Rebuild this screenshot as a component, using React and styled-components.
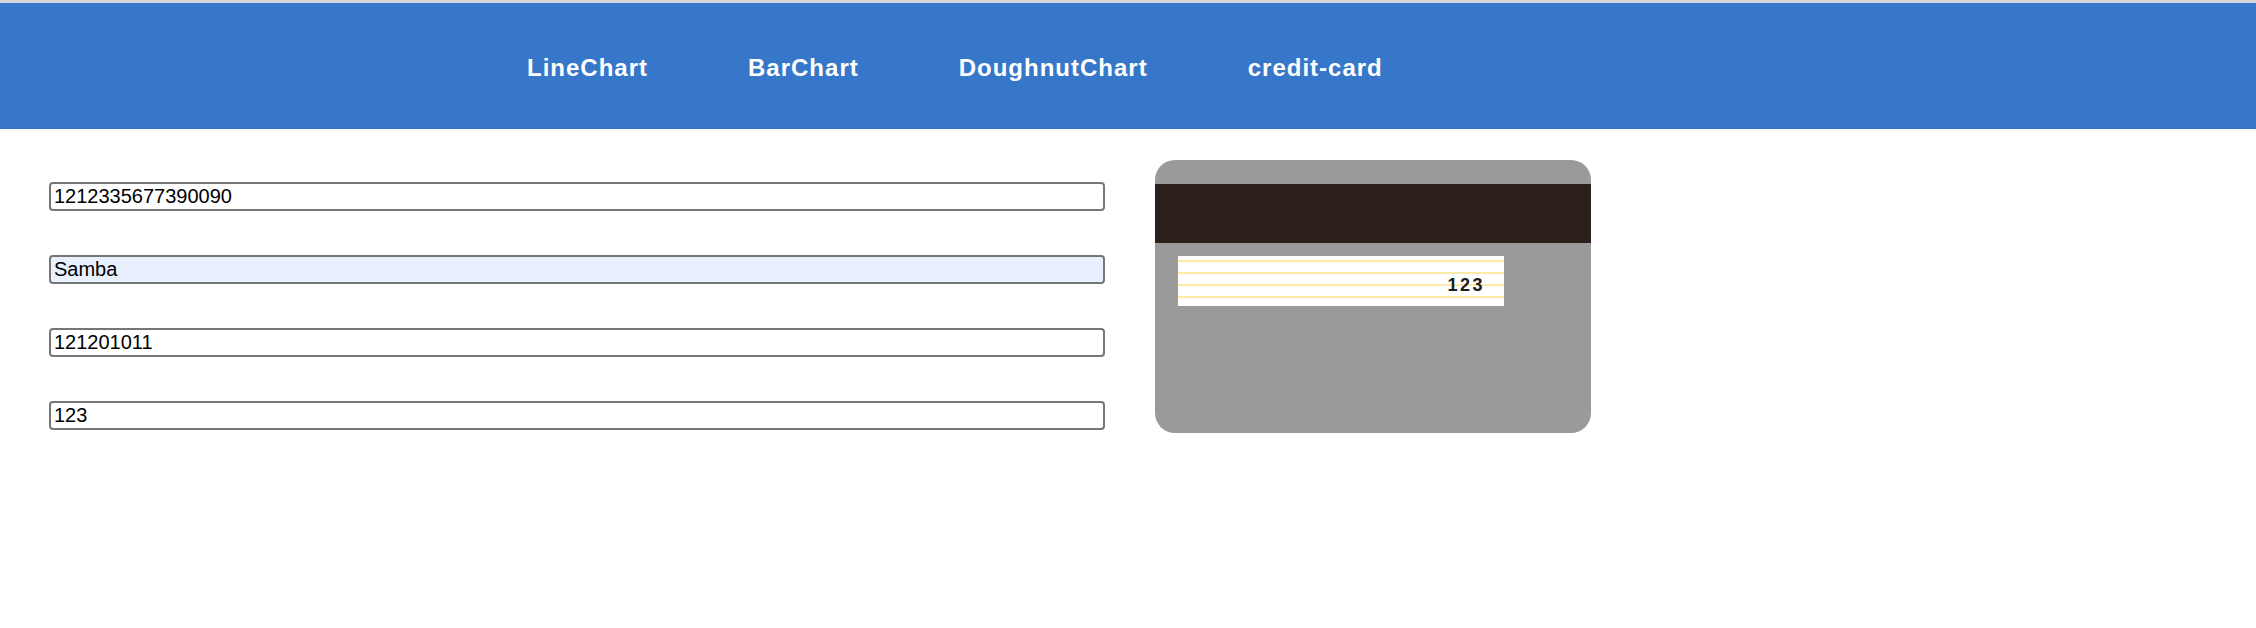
import React from "react";
import styled, { createGlobalStyle } from "styled-components";

const GlobalStyle = createGlobalStyle`
  html, body {
    margin: 0;
    padding: 0;
    background: #ffffff;
    font-family: "Liberation Sans", Arial, sans-serif;
  }
`;

const Header = styled.header`
  box-sizing: border-box;
  height: 129px;
  border-top: 3px solid #d4d6d9;
  background: #3677ca;
  display: flex;
  align-items: center;
  padding-left: 527px;
  gap: 100px;
`;

const NavLink = styled.a`
  color: #ffffff;
  font-family: "Liberation Sans", Arial, sans-serif;
  font-weight: 700;
  font-size: 24px;
  letter-spacing: 1px;
  text-decoration: none;
  cursor: pointer;
  padding-top: 3px;
`;

const Main = styled.main`
  display: flex;
  align-items: flex-start;
  gap: 50px;
  padding: 31px 0 0 49px;
`;

const Form = styled.form`
  width: 1056px;
  display: flex;
  flex-direction: column;
  gap: 44px;
  padding-top: 22px;
`;

const Field = styled.input`
  box-sizing: border-box;
  width: 100%;
  height: 29px;
  margin: 0;
  padding: 0 3px;
  border: 2px solid #767676;
  border-radius: 4px;
  background: ${(p) => (p.$autofilled ? "#e8f0fe" : "#ffffff")};
  color: #000000;
  font-family: "Liberation Sans", Arial, sans-serif;
  font-size: 20px;
  outline: none;
`;

const Card = styled.div`
  box-sizing: border-box;
  width: 436px;
  height: 273px;
  background: #9a9a9a;
  border-radius: 20px;
  overflow: hidden;
  padding-top: 24px;
  display: flex;
  flex-direction: column;
`;

const Stripe = styled.div`
  height: 59px;
  background: #2b1f1b;
`;

const Signature = styled.div`
  box-sizing: border-box;
  width: 326px;
  height: 50px;
  margin: 13px 0 0 23px;
  background: repeating-linear-gradient(
    to bottom,
    #ffffff 0px,
    #ffffff 4px,
    #fbeaa8 4px,
    #fbeaa8 6px,
    #ffffff 6px,
    #ffffff 12px
  );
  display: flex;
  align-items: center;
  justify-content: flex-end;
  padding: 9px 19px 0 0;
`;

const Cvc = styled.span`
  font-family: "Liberation Sans", Arial, sans-serif;
  font-weight: 700;
  font-size: 18px;
  letter-spacing: 2.5px;
  color: #1c1c1c;
`;

export default function App() {
  const links = ["LineChart", "BarChart", "DoughnutChart", "credit-card"];
  return (
    <>
      <GlobalStyle />
      <Header>
        {links.map((l) => (
          <NavLink key={l}>{l}</NavLink>
        ))}
      </Header>
      <Main>
        <Form onSubmit={(e) => e.preventDefault()}>
          <Field defaultValue="1212335677390090" />
          <Field defaultValue="Samba" $autofilled />
          <Field defaultValue="121201011" />
          <Field defaultValue="123" />
        </Form>
        <Card>
          <Stripe />
          <Signature>
            <Cvc>123</Cvc>
          </Signature>
        </Card>
      </Main>
    </>
  );
}
